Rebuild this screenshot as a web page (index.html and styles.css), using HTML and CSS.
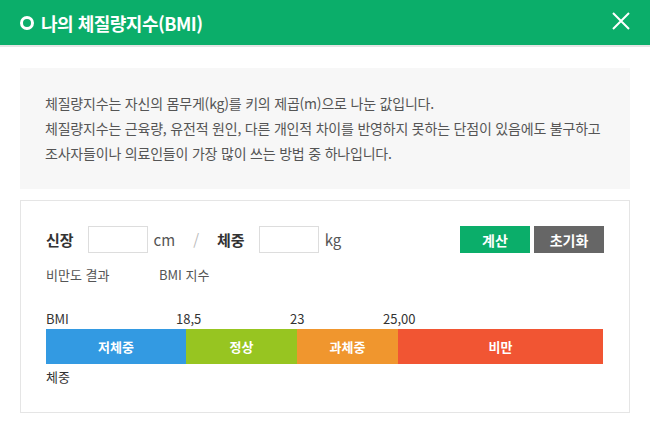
FILE: index.html
```html
<!DOCTYPE html>
<html lang="ko">
<head>
    <meta charset="UTF-8">
    <title>나의 체질량지수(BMI)</title>
    <link rel="stylesheet" href="styles.css">
</head>
<body>

    <div class="popup">
        <div class="popup-head">
            <h1><span class="ring"></span>나의 체질량지수(BMI)</h1>
            <a href="#" class="close" title="닫기">
                <svg width="18" height="18" viewBox="0 0 18 18">
                    <path d="M1 1L17 17M17 1L1 17" stroke="#fff" stroke-width="2" fill="none"/>
                </svg>
            </a>
        </div>

        <div class="popup-body">
            <div class="info">
                <p>체질량지수는 자신의 몸무게(kg)를 키의 제곱(m)으로 나눈 값입니다.</p>
                <p>체질량지수는 근육량, 유전적 원인, 다른 개인적 차이를 반영하지 못하는 단점이 있음에도 불구하고</p>
                <p>조사자들이나 의료인들이 가장 많이 쓰는 방법 중 하나입니다.</p>
            </div>

            <div class="calc">
                <div class="form-row">
                    <label class="lbl">신장</label>
                    <input type="text" class="field">
                    <span class="unit">cm</span>
                    <span class="slash">/</span>
                    <label class="lbl">체중</label>
                    <input type="text" class="field">
                    <span class="unit">kg</span>
                    <div class="btns">
                        <button class="btn btn-calc">계산</button>
                        <button class="btn btn-reset">초기화</button>
                    </div>
                </div>

                <div class="result">
                    <span class="res-title">비만도 결과</span>
                    <span class="res-value">BMI 지수</span>
                </div>

                <div class="scale">
                    <div class="scale-nums">
                        <span class="n-bmi">BMI</span>
                        <span class="n1">18,5</span>
                        <span class="n2">23</span>
                        <span class="n3">25,00</span>
                    </div>
                    <div class="bar">
                        <div class="seg seg-low">저체중</div>
                        <div class="seg seg-normal">정상</div>
                        <div class="seg seg-over">과체중</div>
                        <div class="seg seg-obese">비만</div>
                    </div>
                    <div class="scale-weight">체중</div>
                </div>
            </div>
        </div>
    </div>

</body>
</html>
```

FILE: styles.css
```css
* {
    box-sizing: border-box;
}

body {
    margin: 0;
    background-color: #fff;
    font-family: "Noto Sans CJK KR", "Noto Sans", sans-serif;
    color: #333;
}

.popup {
    width: 650px;
}

.popup-head {
    height: 47px;
    background-color: #0bae6a;
    border-bottom: 2px solid #e5e5e5;
    display: flex;
    align-items: center;
    justify-content: space-between;
    padding: 0 20px;
}

.popup-head h1 {
    margin: 0;
    font-size: 18px;
    font-weight: bold;
    color: #fff;
    display: flex;
    align-items: center;
    letter-spacing: -0.5px;
}

.ring {
    display: inline-block;
    width: 14px;
    height: 14px;
    border: 3px solid #fff;
    border-radius: 50%;
    margin-right: 7px;
}

.close {
    display: block;
    width: 18px;
    height: 18px;
    margin-top: -4px;
}

.close svg {
    display: block;
}

.popup-body {
    padding: 21px 20px 0;
}

.info {
    background-color: #f7f7f7;
    height: 121px;
    padding: 23px 25px 0;
    font-size: 14px;
    line-height: 25px;
    color: #555;
    letter-spacing: -0.2px;
}

.info p {
    margin: 0;
    white-space: nowrap;
}

.calc {
    margin-top: 11px;
    border: 1px solid #e5e5e5;
    height: 213px;
    padding: 25px 25px 0 25px;
}

.form-row {
    display: flex;
    align-items: center;
    height: 27px;
}

.lbl {
    font-size: 15px;
    font-weight: bold;
    color: #333;
    margin-right: 14px;
}

.field {
    width: 60px;
    height: 27px;
    border: 1px solid #ddd;
    margin: 0;
    padding: 0;
    font-size: 14px;
}

.unit {
    font-size: 15px;
    color: #555;
    margin-left: 6px;
}

.slash {
    font-size: 15px;
    color: #bbb;
    margin: 0 18px;
}

.btns {
    margin-left: auto;
    display: flex;
    gap: 4px;
}

.btn {
    width: 70px;
    height: 27px;
    border: none;
    margin: 0;
    padding: 0;
    color: #fff;
    font-family: inherit;
    font-size: 14px;
    font-weight: bold;
    cursor: pointer;
}

.btn-calc {
    background-color: #0bae6a;
}

.btn-reset {
    background-color: #666;
}

.result {
    display: flex;
    margin-top: 12px;
    font-size: 13px;
    color: #555;
    line-height: 20px;
}

.res-title {
    width: 113px;
}

.scale {
    margin-top: 24px;
}

.scale-nums {
    position: relative;
    height: 20px;
    font-size: 13px;
    line-height: 20px;
    color: #333;
}

.scale-nums span {
    position: absolute;
    top: 0;
}

.n-bmi { left: 0; }
.n1 { left: 130px; }
.n2 { left: 244px; }
.n3 { left: 337px; }

.bar {
    display: flex;
    height: 35px;
    width: 557px;
}

.seg {
    display: flex;
    align-items: center;
    justify-content: center;
    color: #fff;
    font-size: 13px;
    font-weight: bold;
}

.seg-low {
    width: 140px;
    background-color: #339ae2;
}

.seg-normal {
    width: 111px;
    background-color: #97c521;
}

.seg-over {
    width: 101px;
    background-color: #f0962e;
}

.seg-obese {
    flex: 1;
    background-color: #f15533;
}

.scale-weight {
    font-size: 13px;
    line-height: 26px;
    color: #333;
}
```
